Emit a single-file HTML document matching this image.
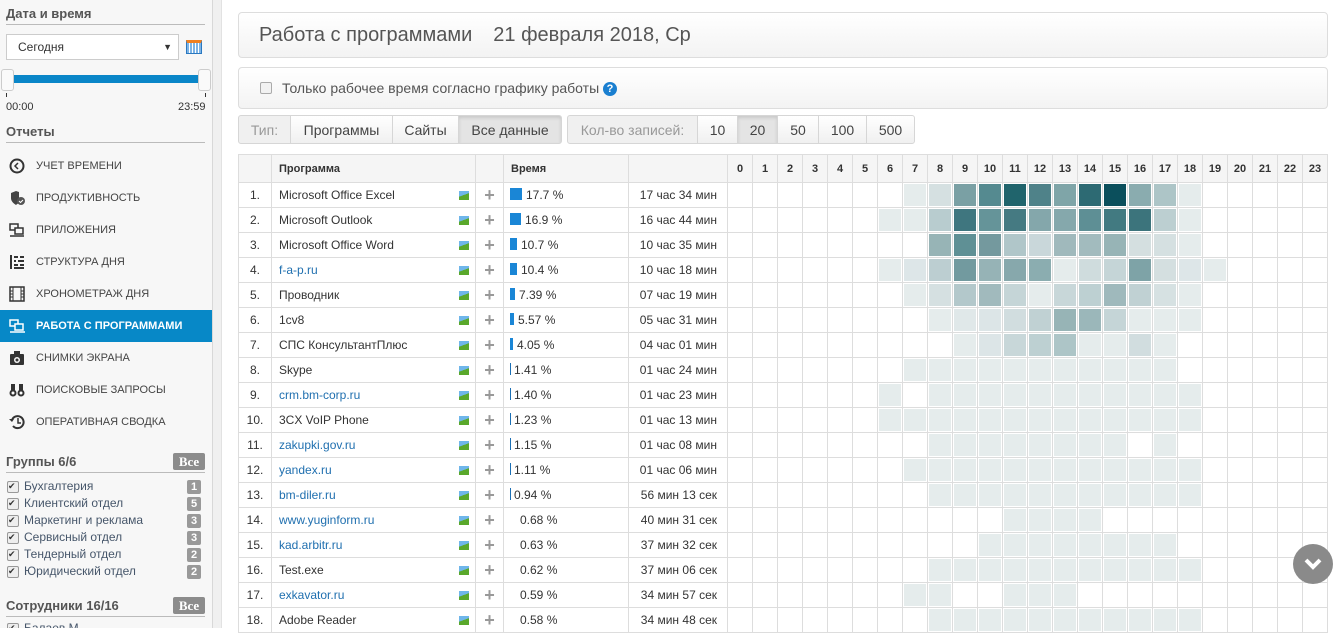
<!DOCTYPE html>
<html><head><meta charset="utf-8">
<style>
*{box-sizing:border-box;margin:0;padding:0}
body{width:1338px;height:628px;overflow:hidden;background:#fff;font-family:"Liberation Sans",Arial,sans-serif;position:relative;color:#333}
.abs{position:absolute}
#side{position:absolute;left:0;top:0;width:213px;height:628px;background:#f7f7f7;border-right:1px solid #d8d8d8;overflow:hidden}
#strip{position:absolute;left:213px;top:0;width:9px;height:628px;background:#f0f0f0;border-right:1px solid #e2e2e2}
.h{position:absolute;left:6px;width:199px;font-weight:bold;font-size:13px;color:#555;border-bottom:1px solid #bbb;padding-bottom:3px}
.mi{position:absolute;left:0;width:213px;height:32px;font-size:11px;color:#444;line-height:32px;padding-left:36px;text-transform:uppercase}
.mi svg{position:absolute;left:9px;top:8px}
.mi.act{background:#0788c7;color:#fff;font-weight:bold}
.gi{position:absolute;left:7px;width:196px;font-size:12px;color:#46566a;height:17px;line-height:17px;padding-left:17px}
.gi:before{content:"";position:absolute;left:0;top:3px;width:10px;height:10px;border:1px solid #999;background:#eee;border-radius:2px}
.gi:after{content:"✔";position:absolute;left:1px;top:0;font-size:9px;color:#333}
.gi b{position:absolute;right:2px;top:2px;width:14px;height:14px;background:#999;color:#fff;font-size:11px;line-height:14px;text-align:center;border-radius:2px;font-weight:bold}
.badge{position:absolute;left:173px;width:32px;height:17px;background:#8c8c8c;color:#fff;font-weight:bold;font-size:13px;text-align:center;line-height:17px;border-radius:2px;font-family:"Liberation Serif",serif}
.box{position:absolute;left:238px;width:1090px;border:1px solid #ddd;border-radius:4px;background:linear-gradient(#fff,#f3f3f3)}
.btn{position:absolute;top:115px;height:29px;line-height:28px;font-size:14px;color:#444;text-align:center;border:1px solid #d6d6d6;background:linear-gradient(#fff,#f0f0f0)}
.lbl{color:#999;background:#f0f0f0}
.on{background:#e4e4e4;box-shadow:inset 0 2px 3px rgba(0,0,0,.12)}
table{position:absolute;left:238px;top:154px;border-collapse:collapse;table-layout:fixed;font-size:12px}
td,th{border:1px solid #ddd;height:25px;padding:0;overflow:hidden;white-space:nowrap}
tr{height:25px}
th{height:28px;background:#f5f5f5;font-size:11px;text-align:left;padding-left:7px;color:#333}
th.hr{text-align:center;padding:0;font-weight:bold;font-size:11px}
td.n{text-align:center;color:#333}
td.p{padding-left:7px;position:relative}
td.p a{color:#1f6faf;text-decoration:none}
td.p .im{position:absolute;right:6px;top:8px;width:10px;height:9px;background:linear-gradient(160deg,#6fb6ea 45%,#5aa82c 46%)}
td.pl{text-align:center;color:#999;font-size:18px;font-weight:bold}
td.t{padding-left:6px;color:#333}
td.t i{display:inline-block;width:12px;height:12px;background:#1a86d6;vertical-align:-1px;margin-right:4px}
td.t i.s{width:1px;background:#1a6fb5;margin-right:3px}
td.t i.z{width:0;margin-right:10px}
td.tm{text-align:right;padding-right:10px;color:#333}
td.c{position:relative}
td.c i{position:absolute;left:1px;top:1px;right:1px;bottom:1px;background:#e5ecec}
</style></head><body>
<div id="side">
<div class="h" style="top:6px">Дата и время</div>
<div class="abs" style="left:6px;top:34px;width:173px;height:26px;border:1px solid #ccc;background:#fff;font-size:12px;line-height:24px;padding-left:11px;color:#333">Сегодня<span style="position:absolute;right:6px;font-size:9px">▼</span></div>
<div class="abs" style="left:186px;top:40px;width:16px;height:14px;border:1px solid #2a78c0;background:repeating-linear-gradient(90deg,#7db4e6 0 2px,#fff 2px 3px);border-top:3px solid #f08020"></div>
<div class="abs" style="left:7px;top:75px;width:197px;height:8px;background:#0a86c8"></div>
<div class="abs" style="left:1px;top:69px;width:13px;height:22px;background:#fafafa;border:1px solid #ccc;border-radius:3px"></div>
<div class="abs" style="left:198px;top:69px;width:13px;height:22px;background:#fafafa;border:1px solid #ccc;border-radius:3px"></div>
<div class="abs" style="left:6px;top:93px;width:1px;height:4px;background:#333"></div>
<div class="abs" style="left:205px;top:93px;width:1px;height:4px;background:#333"></div>
<div class="abs" style="left:6px;top:101px;font-size:11px;color:#333">00:00</div>
<div class="abs" style="left:178px;top:101px;font-size:11px;color:#333">23:59</div>
<div class="h" style="top:124px">Отчеты</div>
<div class="mi" style="top:150px"><svg width="16" height="16"><circle cx="8" cy="8" r="6.5" fill="none" stroke="#333" stroke-width="2"/><path d="M9 5L6 8l3 3" fill="none" stroke="#333" stroke-width="1.5"/></svg>Учет времени</div>
<div class="mi" style="top:182px"><svg width="16" height="16"><path d="M7 1L2 3v5c0 3 2 5 5 7 1-1 2-1 3-3V2z" fill="#444"/><circle cx="12" cy="11" r="4" fill="#555"/><path d="M10 11l1.5 1.5L14 10" stroke="#fff" fill="none"/></svg>Продуктивность</div>
<div class="mi" style="top:214px"><svg width="16" height="16"><rect x="1" y="2" width="8" height="6" fill="none" stroke="#333" stroke-width="1.5"/><rect x="6" y="6" width="8" height="6" fill="#f7f7f7" stroke="#333" stroke-width="1.5"/><path d="M1 14h14" stroke="#333" stroke-width="1.5"/></svg>Приложения</div>
<div class="mi" style="top:246px"><svg width="16" height="16"><path d="M2 1v14" stroke="#333" stroke-width="2"/><path d="M5 3h4M11 3h4M5 7h2M9 7h6M5 11h4M11 11h4M5 14h10" stroke="#333" stroke-width="2"/></svg>Структура дня</div>
<div class="mi" style="top:278px"><svg width="16" height="16"><rect x="1" y="1" width="14" height="14" fill="none" stroke="#333" stroke-width="1.5"/><path d="M4 1v14M12 1v14M1 5h3M1 8h3M1 11h3M12 5h3M12 8h3M12 11h3" stroke="#333"/></svg>Хронометраж дня</div>
<div class="mi act" style="top:310px"><svg width="16" height="16"><rect x="1" y="2" width="8" height="6" fill="none" stroke="#fff" stroke-width="1.5"/><rect x="6" y="6" width="8" height="6" fill="#0788c7" stroke="#fff" stroke-width="1.5"/><path d="M1 14h15" stroke="#fff" stroke-width="1.5"/></svg>Работа с программами</div>
<div class="mi" style="top:342px"><svg width="16" height="16"><rect x="1" y="4" width="14" height="11" rx="1" fill="#333"/><rect x="5" y="1" width="6" height="4" fill="#333"/><circle cx="8" cy="10" r="3" fill="#f7f7f7"/><circle cx="8" cy="10" r="1.5" fill="#333"/></svg>Снимки экрана</div>
<div class="mi" style="top:374px"><svg width="16" height="16"><circle cx="4" cy="11" r="3.5" fill="#333"/><circle cx="12" cy="11" r="3.5" fill="#333"/><rect x="2" y="2" width="4" height="8" fill="#333"/><rect x="10" y="2" width="4" height="8" fill="#333"/><circle cx="4" cy="11" r="1.5" fill="#fff"/><circle cx="12" cy="11" r="1.5" fill="#fff"/></svg>Поисковые запросы</div>
<div class="mi" style="top:406px"><svg width="16" height="16"><path d="M3 6a6 6 0 1 1 1 6" fill="none" stroke="#333" stroke-width="2"/><path d="M0 5h5l-2 3z" fill="#333"/><path d="M9 4v5h3" fill="none" stroke="#333" stroke-width="1.5"/></svg>Оперативная сводка</div>
<div class="h" style="top:454px;width:199px">Группы 6/6</div>
<div class="badge" style="top:453px">Все</div>
<div class="gi" style="top:478px">Бухгалтерия<b>1</b></div>
<div class="gi" style="top:495px">Клиентский отдел<b>5</b></div>
<div class="gi" style="top:512px">Маркетинг и реклама<b>3</b></div>
<div class="gi" style="top:529px">Сервисный отдел<b>3</b></div>
<div class="gi" style="top:546px">Тендерный отдел<b>2</b></div>
<div class="gi" style="top:563px">Юридический отдел<b>2</b></div>
<div class="h" style="top:598px">Сотрудники 16/16</div>
<div class="badge" style="top:597px">Все</div>
<div class="gi" style="top:620px">Балаев М</div>
</div>
<div id="strip"></div>

<div class="box" style="top:12px;height:46px;font-size:20px;color:#555;line-height:44px;padding-left:20px;word-spacing:0">Работа с программами<span style="display:inline-block;width:21px"></span>21 февраля 2018, Ср</div>
<div class="box" style="top:67px;height:42px;font-size:14px;color:#555;line-height:40px;padding-left:43px"><span style="position:absolute;left:21px;top:14px;width:12px;height:12px;border:1px solid #aaa;border-radius:2px;background:#f2f2f2"></span>Только рабочее время согласно графику работы <span style="display:inline-block;width:14px;height:14px;border-radius:50%;background:#1a7fd0;color:#fff;font-size:11px;font-weight:bold;line-height:14px;text-align:center;vertical-align:1px">?</span></div>

<div class="btn lbl" style="left:238px;width:53px;border-radius:3px 0 0 3px">Тип:</div>
<div class="btn" style="left:290px;width:103px">Программы</div>
<div class="btn" style="left:392px;width:67px">Сайты</div>
<div class="btn on" style="left:458px;width:104px;border-radius:0 3px 3px 0">Все данные</div>
<div class="btn lbl" style="left:567px;width:131px;border-radius:3px 0 0 3px">Кол-во записей:</div>
<div class="btn" style="left:697px;width:41px">10</div>
<div class="btn on" style="left:737px;width:41px">20</div>
<div class="btn" style="left:777px;width:42px">50</div>
<div class="btn" style="left:818px;width:49px">100</div>
<div class="btn" style="left:866px;width:49px;border-radius:0 3px 3px 0">500</div>

<table>
<colgroup><col style="width:33px"><col style="width:204px"><col style="width:28px"><col style="width:125px"><col style="width:99px"><col span="24" style="width:25px"></colgroup>
<tr style="height:28px"><th></th><th>Программа</th><th></th><th>Время</th><th></th><th class="hr">0</th><th class="hr">1</th><th class="hr">2</th><th class="hr">3</th><th class="hr">4</th><th class="hr">5</th><th class="hr">6</th><th class="hr">7</th><th class="hr">8</th><th class="hr">9</th><th class="hr">10</th><th class="hr">11</th><th class="hr">12</th><th class="hr">13</th><th class="hr">14</th><th class="hr">15</th><th class="hr">16</th><th class="hr">17</th><th class="hr">18</th><th class="hr">19</th><th class="hr">20</th><th class="hr">21</th><th class="hr">22</th><th class="hr">23</th></tr>
<tr><td class="n">1.</td><td class="p">Microsoft Office Excel<span class="im"></span></td><td class="pl">+</td><td class="t"><i></i>17.7 %</td><td class="tm">17 час 34 мин</td><td></td><td></td><td></td><td></td><td></td><td></td><td></td><td class="c"><i></i></td><td class="c"><i style="background:#d5e0e1"></i></td><td class="c"><i style="background:#7aa0a4"></i></td><td class="c"><i style="background:#558a90"></i></td><td class="c"><i style="background:#20646c"></i></td><td class="c"><i style="background:#4f8289"></i></td><td class="c"><i style="background:#7fa5a8"></i></td><td class="c"><i style="background:#2d6a73"></i></td><td class="c"><i style="background:#0b4f5c"></i></td><td class="c"><i style="background:#8aacaf"></i></td><td class="c"><i style="background:#adc5c7"></i></td><td class="c"><i></i></td><td></td><td></td><td></td><td></td><td></td></tr>
<tr><td class="n">2.</td><td class="p">Microsoft Outlook<span class="im"></span></td><td class="pl">+</td><td class="t"><i style="width:11px"></i>16.9 %</td><td class="tm">16 час 44 мин</td><td></td><td></td><td></td><td></td><td></td><td></td><td class="c"><i></i></td><td class="c"><i></i></td><td class="c"><i style="background:#b8cccf"></i></td><td class="c"><i style="background:#3f767f"></i></td><td class="c"><i style="background:#659499"></i></td><td class="c"><i style="background:#457a82"></i></td><td class="c"><i style="background:#84a7ab"></i></td><td class="c"><i style="background:#85a8ac"></i></td><td class="c"><i style="background:#5e8f95"></i></td><td class="c"><i style="background:#427a81"></i></td><td class="c"><i style="background:#3c747c"></i></td><td class="c"><i style="background:#bccfd1"></i></td><td class="c"><i></i></td><td></td><td></td><td></td><td></td><td></td></tr>
<tr><td class="n">3.</td><td class="p">Microsoft Office Word<span class="im"></span></td><td class="pl">+</td><td class="t"><i style="width:7px"></i>10.7 %</td><td class="tm">10 час 35 мин</td><td></td><td></td><td></td><td></td><td></td><td></td><td></td><td></td><td class="c"><i style="background:#97b4b6"></i></td><td class="c"><i style="background:#5f9095"></i></td><td class="c"><i style="background:#74999e"></i></td><td class="c"><i style="background:#b0c6c9"></i></td><td class="c"><i style="background:#c9d7da"></i></td><td class="c"><i style="background:#a0b9bc"></i></td><td class="c"><i style="background:#a2bbbe"></i></td><td class="c"><i style="background:#97b4b6"></i></td><td class="c"><i style="background:#d4dfe0"></i></td><td class="c"><i style="background:#d5e0e1"></i></td><td class="c"><i></i></td><td></td><td></td><td></td><td></td><td></td></tr>
<tr><td class="n">4.</td><td class="p"><a>f-a-p.ru</a><span class="im"></span></td><td class="pl">+</td><td class="t"><i style="width:7px"></i>10.4 %</td><td class="tm">10 час 18 мин</td><td></td><td></td><td></td><td></td><td></td><td></td><td class="c"><i></i></td><td class="c"><i style="background:#dde6e8"></i></td><td class="c"><i style="background:#bcced1"></i></td><td class="c"><i style="background:#729a9f"></i></td><td class="c"><i style="background:#96b3b6"></i></td><td class="c"><i style="background:#87a8ac"></i></td><td class="c"><i style="background:#8badb0"></i></td><td class="c"><i></i></td><td class="c"><i style="background:#cfdcdd"></i></td><td class="c"><i style="background:#c5d5d7"></i></td><td class="c"><i style="background:#7ea3a7"></i></td><td class="c"><i style="background:#d4dfe0"></i></td><td class="c"><i style="background:#dde6e8"></i></td><td class="c"><i></i></td><td></td><td></td><td></td><td></td></tr>
<tr><td class="n">5.</td><td class="p">Проводник<span class="im"></span></td><td class="pl">+</td><td class="t"><i style="width:5px"></i>7.39 %</td><td class="tm">07 час 19 мин</td><td></td><td></td><td></td><td></td><td></td><td></td><td></td><td class="c"><i></i></td><td class="c"><i style="background:#d5e0e1"></i></td><td class="c"><i style="background:#b3c8cb"></i></td><td class="c"><i style="background:#a1babd"></i></td><td class="c"><i style="background:#c5d5d7"></i></td><td class="c"><i></i></td><td class="c"><i style="background:#c8d7d9"></i></td><td class="c"><i style="background:#bdd0d2"></i></td><td class="c"><i style="background:#9fb9bc"></i></td><td class="c"><i style="background:#c0d1d3"></i></td><td class="c"><i style="background:#d6e1e2"></i></td><td class="c"><i></i></td><td></td><td></td><td></td><td></td><td></td></tr>
<tr><td class="n">6.</td><td class="p">1cv8<span class="im"></span></td><td class="pl">+</td><td class="t"><i style="width:4px"></i>5.57 %</td><td class="tm">05 час 31 мин</td><td></td><td></td><td></td><td></td><td></td><td></td><td></td><td></td><td class="c"><i></i></td><td class="c"><i style="background:#e0e8e9"></i></td><td class="c"><i style="background:#dce5e7"></i></td><td class="c"><i style="background:#d1dddf"></i></td><td class="c"><i style="background:#c0d1d3"></i></td><td class="c"><i style="background:#97b4b6"></i></td><td class="c"><i style="background:#9bb7ba"></i></td><td class="c"><i style="background:#c5d5d7"></i></td><td class="c"><i></i></td><td class="c"><i></i></td><td class="c"><i></i></td><td></td><td></td><td></td><td></td><td></td></tr>
<tr><td class="n">7.</td><td class="p">СПС КонсультантПлюс<span class="im"></span></td><td class="pl">+</td><td class="t"><i style="width:3px"></i>4.05 %</td><td class="tm">04 час 01 мин</td><td></td><td></td><td></td><td></td><td></td><td></td><td></td><td></td><td></td><td class="c"><i></i></td><td class="c"><i style="background:#dce5e7"></i></td><td class="c"><i style="background:#c8d7d9"></i></td><td class="c"><i style="background:#bdd0d2"></i></td><td class="c"><i style="background:#adc5c7"></i></td><td class="c"><i></i></td><td class="c"><i></i></td><td class="c"><i style="background:#d1dddf"></i></td><td class="c"><i></i></td><td></td><td></td><td></td><td></td><td></td><td></td></tr>
<tr><td class="n">8.</td><td class="p">Skype<span class="im"></span></td><td class="pl">+</td><td class="t"><i class="s"></i>1.41 %</td><td class="tm">01 час 24 мин</td><td></td><td></td><td></td><td></td><td></td><td></td><td></td><td class="c"><i></i></td><td class="c"><i></i></td><td class="c"><i></i></td><td class="c"><i></i></td><td class="c"><i></i></td><td class="c"><i></i></td><td class="c"><i></i></td><td class="c"><i></i></td><td class="c"><i></i></td><td class="c"><i></i></td><td class="c"><i></i></td><td></td><td></td><td></td><td></td><td></td><td></td></tr>
<tr><td class="n">9.</td><td class="p"><a>crm.bm-corp.ru</a><span class="im"></span></td><td class="pl">+</td><td class="t"><i class="s"></i>1.40 %</td><td class="tm">01 час 23 мин</td><td></td><td></td><td></td><td></td><td></td><td></td><td class="c"><i></i></td><td></td><td class="c"><i></i></td><td class="c"><i></i></td><td class="c"><i></i></td><td class="c"><i></i></td><td class="c"><i></i></td><td class="c"><i></i></td><td class="c"><i></i></td><td class="c"><i></i></td><td class="c"><i></i></td><td class="c"><i></i></td><td class="c"><i></i></td><td></td><td></td><td></td><td></td><td></td></tr>
<tr><td class="n">10.</td><td class="p">3CX VoIP Phone<span class="im"></span></td><td class="pl">+</td><td class="t"><i class="s"></i>1.23 %</td><td class="tm">01 час 13 мин</td><td></td><td></td><td></td><td></td><td></td><td></td><td class="c"><i></i></td><td class="c"><i></i></td><td class="c"><i></i></td><td class="c"><i></i></td><td class="c"><i></i></td><td class="c"><i></i></td><td class="c"><i></i></td><td class="c"><i></i></td><td class="c"><i></i></td><td class="c"><i></i></td><td class="c"><i></i></td><td class="c"><i></i></td><td class="c"><i></i></td><td></td><td></td><td></td><td></td><td></td></tr>
<tr><td class="n">11.</td><td class="p"><a>zakupki.gov.ru</a><span class="im"></span></td><td class="pl">+</td><td class="t"><i class="s"></i>1.15 %</td><td class="tm">01 час 08 мин</td><td></td><td></td><td></td><td></td><td></td><td></td><td></td><td></td><td class="c"><i></i></td><td class="c"><i></i></td><td class="c"><i></i></td><td class="c"><i></i></td><td class="c"><i></i></td><td class="c"><i></i></td><td class="c"><i></i></td><td class="c"><i></i></td><td></td><td class="c"><i></i></td><td></td><td></td><td></td><td></td><td></td><td></td></tr>
<tr><td class="n">12.</td><td class="p"><a>yandex.ru</a><span class="im"></span></td><td class="pl">+</td><td class="t"><i class="s"></i>1.11 %</td><td class="tm">01 час 06 мин</td><td></td><td></td><td></td><td></td><td></td><td></td><td></td><td class="c"><i></i></td><td class="c"><i></i></td><td class="c"><i></i></td><td class="c"><i></i></td><td class="c"><i></i></td><td class="c"><i></i></td><td class="c"><i></i></td><td class="c"><i></i></td><td class="c"><i></i></td><td class="c"><i></i></td><td class="c"><i></i></td><td class="c"><i></i></td><td></td><td></td><td></td><td></td><td></td></tr>
<tr><td class="n">13.</td><td class="p"><a>bm-diler.ru</a><span class="im"></span></td><td class="pl">+</td><td class="t"><i class="s"></i>0.94 %</td><td class="tm">56 мин 13 сек</td><td></td><td></td><td></td><td></td><td></td><td></td><td></td><td></td><td class="c"><i></i></td><td class="c"><i></i></td><td class="c"><i></i></td><td class="c"><i></i></td><td class="c"><i></i></td><td class="c"><i></i></td><td class="c"><i></i></td><td class="c"><i></i></td><td class="c"><i></i></td><td class="c"><i></i></td><td class="c"><i></i></td><td></td><td></td><td></td><td></td><td></td></tr>
<tr><td class="n">14.</td><td class="p"><a>www.yuginform.ru</a><span class="im"></span></td><td class="pl">+</td><td class="t"><i class="z"></i>0.68 %</td><td class="tm">40 мин 31 сек</td><td></td><td></td><td></td><td></td><td></td><td></td><td></td><td></td><td></td><td></td><td></td><td class="c"><i></i></td><td class="c"><i></i></td><td class="c"><i></i></td><td class="c"><i></i></td><td></td><td></td><td></td><td></td><td></td><td></td><td></td><td></td><td></td></tr>
<tr><td class="n">15.</td><td class="p"><a>kad.arbitr.ru</a><span class="im"></span></td><td class="pl">+</td><td class="t"><i class="z"></i>0.63 %</td><td class="tm">37 мин 32 сек</td><td></td><td></td><td></td><td></td><td></td><td></td><td></td><td></td><td></td><td></td><td class="c"><i></i></td><td class="c"><i></i></td><td class="c"><i></i></td><td class="c"><i></i></td><td class="c"><i></i></td><td class="c"><i></i></td><td class="c"><i></i></td><td class="c"><i></i></td><td></td><td></td><td></td><td></td><td></td><td></td></tr>
<tr><td class="n">16.</td><td class="p">Test.exe<span class="im"></span></td><td class="pl">+</td><td class="t"><i class="z"></i>0.62 %</td><td class="tm">37 мин 06 сек</td><td></td><td></td><td></td><td></td><td></td><td></td><td></td><td></td><td class="c"><i></i></td><td class="c"><i></i></td><td class="c"><i></i></td><td class="c"><i></i></td><td class="c"><i></i></td><td class="c"><i></i></td><td class="c"><i></i></td><td class="c"><i></i></td><td class="c"><i></i></td><td class="c"><i></i></td><td class="c"><i></i></td><td></td><td></td><td></td><td></td><td></td></tr>
<tr><td class="n">17.</td><td class="p"><a>exkavator.ru</a><span class="im"></span></td><td class="pl">+</td><td class="t"><i class="z"></i>0.59 %</td><td class="tm">34 мин 57 сек</td><td></td><td></td><td></td><td></td><td></td><td></td><td></td><td class="c"><i></i></td><td class="c"><i></i></td><td></td><td></td><td class="c"><i></i></td><td class="c"><i></i></td><td class="c"><i></i></td><td></td><td></td><td></td><td></td><td></td><td></td><td></td><td></td><td></td><td></td></tr>
<tr><td class="n">18.</td><td class="p">Adobe Reader<span class="im"></span></td><td class="pl">+</td><td class="t"><i class="z"></i>0.58 %</td><td class="tm">34 мин 48 сек</td><td></td><td></td><td></td><td></td><td></td><td></td><td></td><td></td><td class="c"><i></i></td><td class="c"><i></i></td><td class="c"><i></i></td><td class="c"><i></i></td><td class="c"><i></i></td><td class="c"><i></i></td><td class="c"><i></i></td><td class="c"><i></i></td><td class="c"><i></i></td><td class="c"><i></i></td><td class="c"><i></i></td><td></td><td></td><td></td><td></td><td></td></tr>
</table>
<div class="abs" style="left:1293px;top:544px;width:40px;height:40px;border-radius:50%;background:#8a8a8a"><svg width="40" height="40"><path d="M13 16l7 7 7-7" fill="none" stroke="#fff" stroke-width="4"/></svg></div>
</body></html>
